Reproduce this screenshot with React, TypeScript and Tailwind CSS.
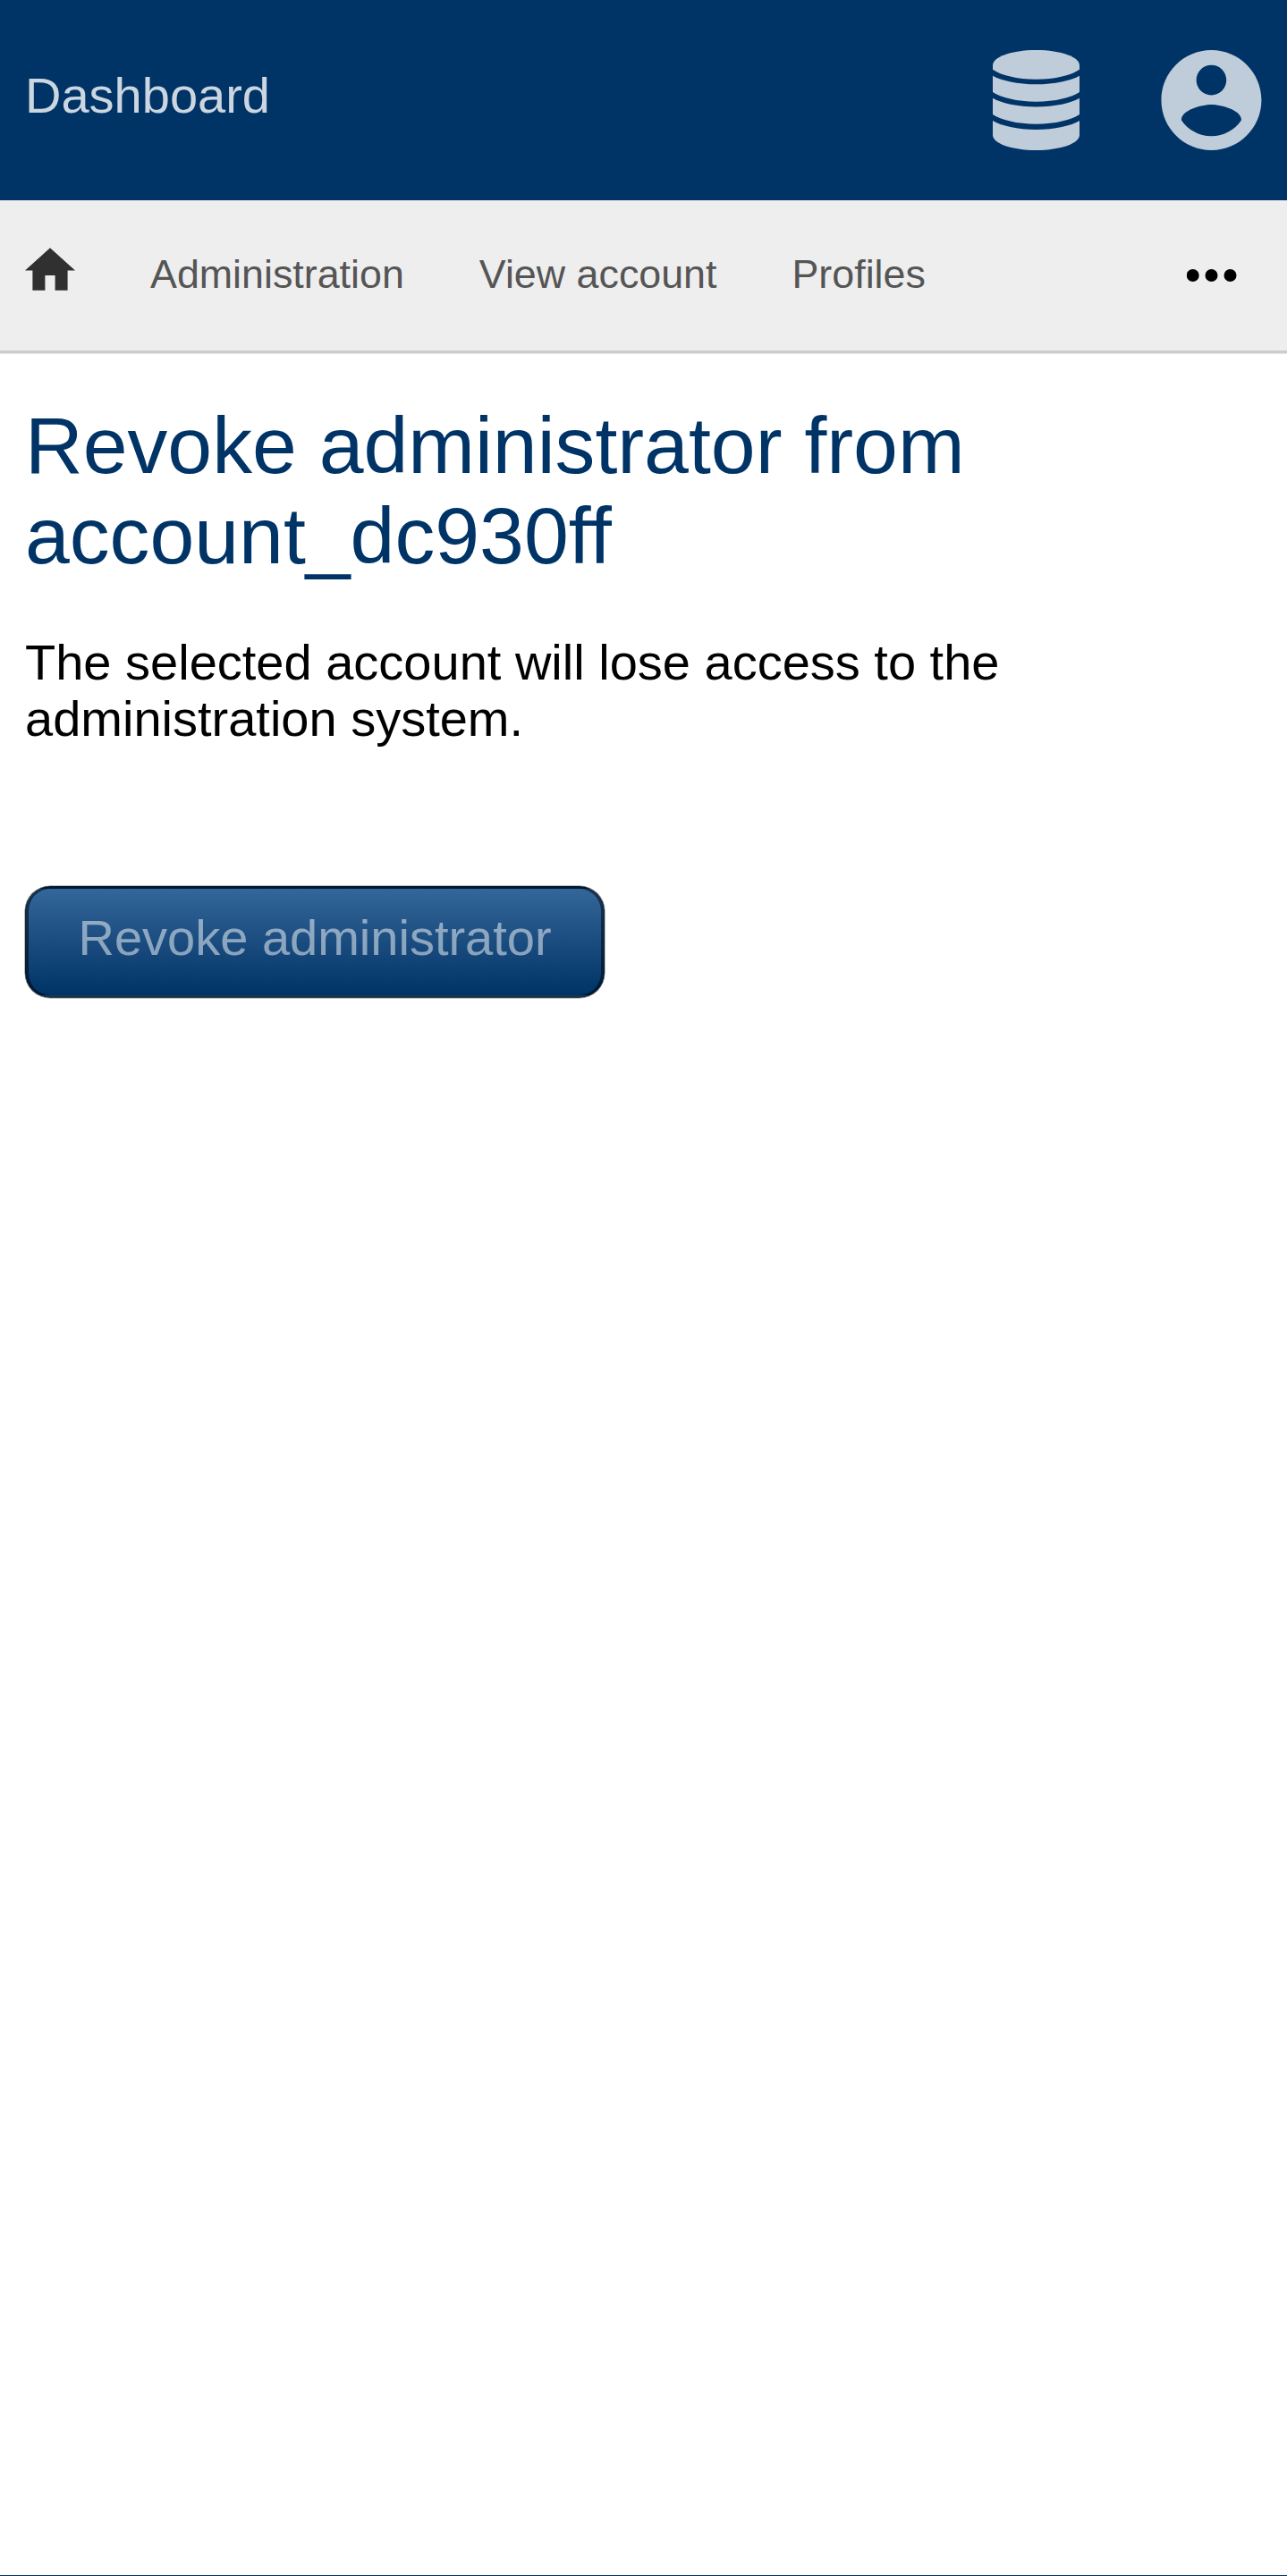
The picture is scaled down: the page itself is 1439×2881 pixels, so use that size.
export default function App() {
  return (
    <div className="flex h-[2881px] w-[1439px] flex-col overflow-hidden border-b border-[#003366] bg-white font-['Liberation_Sans',Arial,sans-serif] text-[56px] leading-[63px] text-black">
      <header className="flex h-[224px] shrink-0 items-start justify-between bg-[#003366] px-[28px]">
        <a className="mt-[75px] text-[#ccd6e0]">Dashboard</a>
        <div className="mt-[56px] flex gap-[92px]">
          <svg width="97" height="112" viewBox="0 0 97 112" fill="#bfccd9">
            <path d="M0 17C0 8 20 0 48.500 0S97 8 97 17V21.700C88 28 70 32.700 48.500 32.700S9 28 0 21.700Z" />
            <path d="M0 28.700C9 34 28 38.300 48.500 38.300S88 34 97 28.700V47C88 53 70 57.700 48.500 57.700S9 53 0 47Z" />
            <path d="M0 53.700C9 59 28 63.500 48.500 63.500S88 59 97 53.700V72C88 78 70 82.700 48.500 82.700S9 78 0 72Z" />
            <path d="M0 79C9 84.500 28 89 48.500 89S88 84.500 97 79V95C97 104 77 112 48.500 112S0 104 0 95Z" />
          </svg>
          <svg className="overflow-visible" width="112" height="112" viewBox="2.100 2 20 20" fill="#bfccd9">
            <path d="M12 2C6.480 2 2 6.480 2 12s4.480 10 10 10 10-4.480 10-10S17.520 2 12 2zm0 3c1.660 0 3 1.340 3 3s-1.340 3-3 3-3-1.340-3-3 1.340-3 3-3zm0 14.200c-2.500 0-4.710-1.280-6-3.220.030-1.990 4-3.080 6-3.080 1.990 0 5.970 1.090 6 3.080-1.290 1.940-3.500 3.220-6 3.220z" />
          </svg>
        </div>
      </header>
      <nav className="flex h-[171px] shrink-0 items-start border-b-[3px] border-[#cccccc] bg-[#eeeeee] pl-[28px] pr-[56px] text-[44.8px] leading-[51px] text-[#555555] shadow-[0_1px_0_#e6e6e6]">
        <svg className="mt-[53px]" width="56" height="48" viewBox="2 3 20 17" fill="#303030">
          <path d="M10 20v-6h4v6h5v-8h3L12 3 2 12h3v8z" />
        </svg>
        <a className="ml-[84px] mt-[57px]">Administration</a>
        <a className="ml-[84px] mt-[57px]">View account</a>
        <a className="ml-[84px] mt-[57px]">Profiles</a>
        <svg className="ml-auto mt-[77px]" width="56" height="14" viewBox="0 0 56 14" fill="#000000">
          <circle cx="6.700" cy="7" r="7" />
          <circle cx="27.500" cy="7" r="7" />
          <circle cx="48.500" cy="7" r="7" />
        </svg>
      </nav>
      <main className="flex flex-col items-start px-[28px] pt-[53px]">
        <h1 className="w-[1200px] text-[89.6px] leading-[101px] text-[#003366]">Revoke administrator from account_dc930ff</h1>
        <p className="mt-[59px] w-[1300px]">The selected account will lose access to the administration system.</p>
        <button className="mt-[156px] h-[125px] w-[647.5px] whitespace-nowrap rounded-[28px] border-x-[4px] border-y-[3px] border-black/50 bg-linear-to-b from-[#336699] to-[#003366] pb-[11px] pl-[55.5px] text-left text-white/50 shadow-[0_0_0_0.500px_rgba(0,0,0,0.500)]">
          Revoke administrator
        </button>
      </main>
    </div>
  );
}
